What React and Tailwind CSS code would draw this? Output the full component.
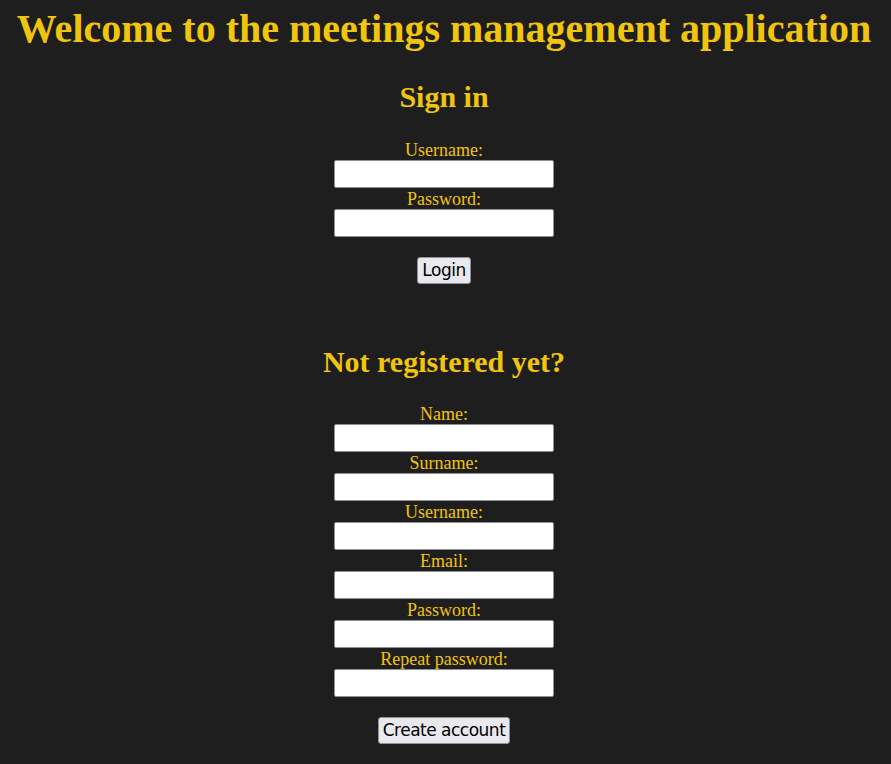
import React from "react";

const serif = "font-['Liberation_Serif','Times_New_Roman',serif]";

function Field({ label, type = "text" }) {
  return (
    <div className="flex flex-col items-center">
      <label className={`${serif} text-[18px] leading-[20px] text-[#f1c40f]`}>{label}</label>
      <input
        type={type}
        className="w-[220px] h-[28px] bg-white border border-[#8f8f9d] rounded-[2px] px-1 mb-[1px] text-black"
      />
    </div>
  );
}

function FormButton({ children }) {
  return (
    <button className="mt-[19px] px-[4px] h-[27px] bg-[#e9e9ed] border border-[#8f8f9d] rounded-[3px] text-black text-[17px] leading-none font-['DejaVu_Sans',sans-serif] tracking-[-0.5px]">
      {children}
    </button>
  );
}

export default function App() {
  return (
    <div className="min-h-[764px] bg-[#1e1e1e] flex flex-col items-center pr-[3px] text-[#f1c40f]">
      <h1 className={`${serif} font-bold text-[40px] leading-[44px] mt-[7px]`}>
        Welcome to the meetings management application
      </h1>

      <h2 className={`${serif} font-bold text-[30px] leading-[34px] mt-[29px]`}>Sign in</h2>
      <form className="flex flex-col items-center mt-[26px]">
        <Field label="Username:" />
        <Field label="Password:" type="password" />
        <FormButton>Login</FormButton>
      </form>

      <h2 className={`${serif} font-bold text-[30px] leading-[34px] mt-[61px]`}>Not registered yet?</h2>
      <form className="flex flex-col items-center mt-[25px]">
        <Field label="Name:" />
        <Field label="Surname:" />
        <Field label="Username:" />
        <Field label="Email:" type="email" />
        <Field label="Password:" type="password" />
        <Field label="Repeat password:" type="password" />
        <FormButton>Create account</FormButton>
      </form>
    </div>
  );
}
